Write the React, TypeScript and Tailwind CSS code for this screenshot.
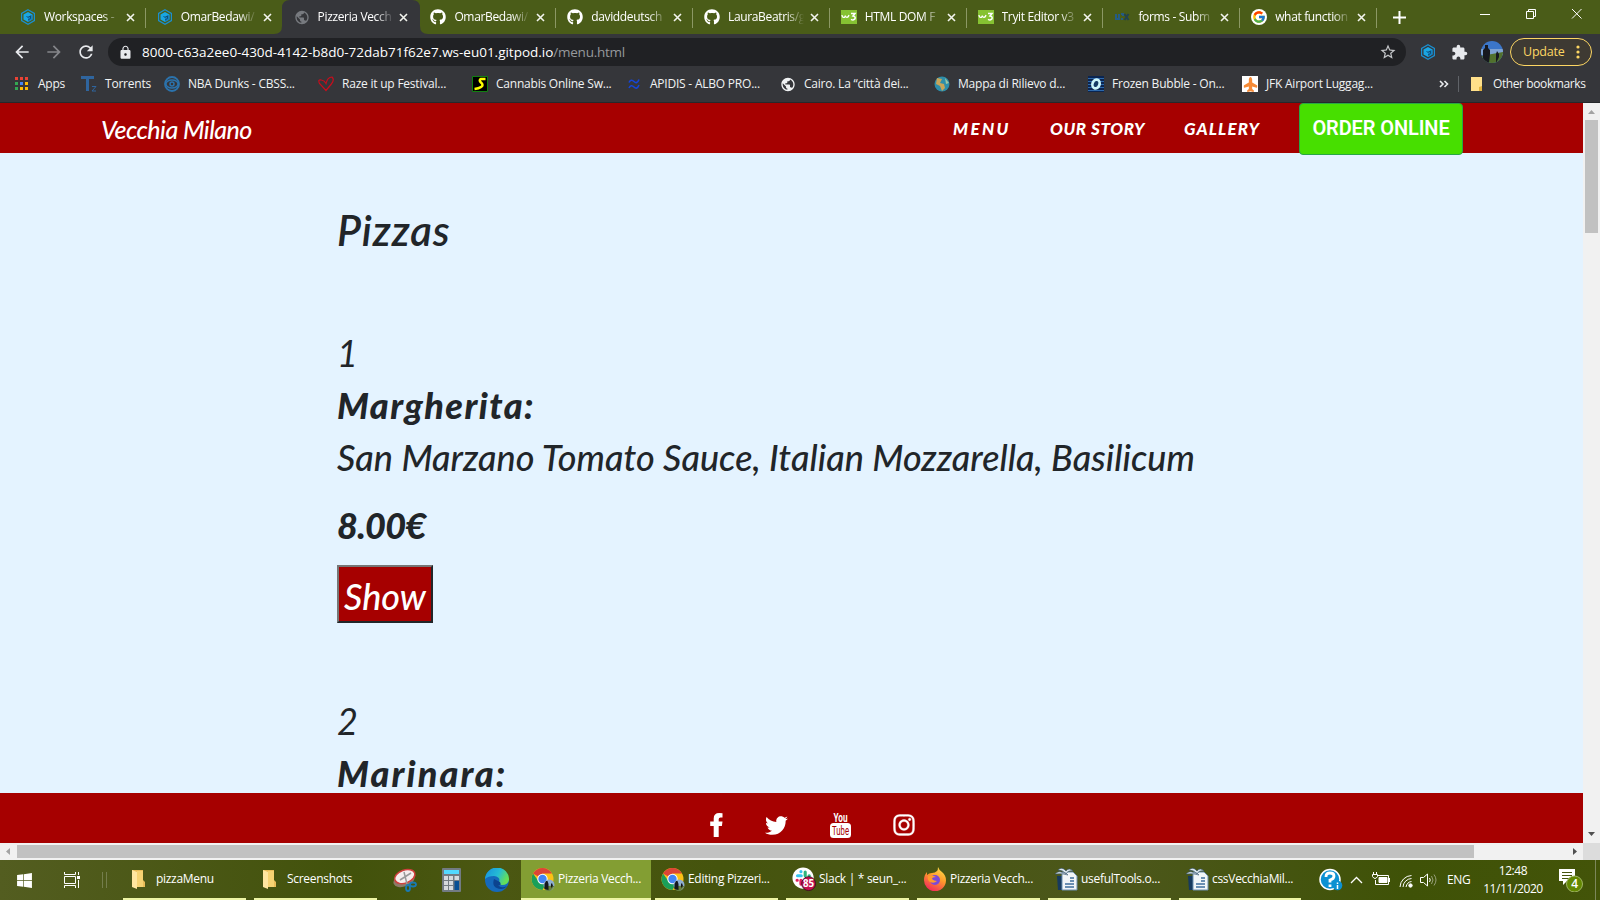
import React from 'react';
import { FaTwitter, FaInstagram, FaGithub, FaPlane, FaWindows } from 'react-icons/fa';
import { FcGoogle } from 'react-icons/fc';
import { MdArrowBack, MdArrowForward, MdRefresh, MdStarBorder, MdPublic, MdExtension, MdLock } from 'react-icons/md';

const Gitpod = () => (
  <svg className="size-4" viewBox="0 0 16 16" fill="none">
    <path d="M8 .8 14.4 4.4v7.2L8 15.2 1.6 11.600V4.400Z" stroke="#1b8fd0" strokeWidth="1.2" />
    <path d="M8 3 12.500 5.500v5L8 13 3.500 10.500v-5Z" fill="#1aa6e4" />
    <path d="M8 8v5l4.500-2.500v-5Z" fill="#1583c4" />
    <path d="M6.500 7.500 8 8.300l2.500-1.400v2.600L8 11" stroke="#0d4f78" strokeWidth="1" />
  </svg>
);
const W3 = () => (
  <svg className="size-4" viewBox="0 0 16 16" fill="none">
    <path fill="#86c232" d="M0 1h16v14H0z" />
    <path d="M1 6q.3 2.500 1.700 2.300Q4 8.500 4.300 6.500q.3 2 1.800 1.800Q7.500 8 8 6" stroke="#fff" strokeWidth="1.300" />
    <path d="M10 4.500h4L12 7q2.800.3 2 2.800-1.500 2-4 .5" stroke="#fff" strokeWidth="1.500" />
  </svg>
);
const Ux = () => (
  <svg className="size-4" viewBox="0 0 16 16" fill="none" strokeWidth="2">
    <path d="M2 5v5h3V5M7 5h2v2M7 10h2" stroke="#245c85" />
    <path d="m10.500 5 4 6m0-6-4 6" stroke="#22424f" />
  </svg>
);
const Google = () => (
  <span className="flex size-4 items-center justify-center rounded-full bg-white"><FcGoogle className="size-3.5" /></span>
);
const Close = () => (
  <svg className="size-[9px] shrink-0" viewBox="0 0 9 9"><path d="m1 1 7 7m0-7L1 8" stroke="#f3f5ee" strokeWidth="1.600" /></svg>
);

const tabs = [
  { icon: <Gitpod />, title: 'Workspaces -' },
  { icon: <Gitpod />, title: 'OmarBedawi/' },
  { icon: <MdPublic className="size-[17px] text-[#777a7f]" />, title: 'Pizzeria Vecch' },
  { icon: <FaGithub className="size-4 text-white" />, title: 'OmarBedawi/' },
  { icon: <FaGithub className="size-4 text-white" />, title: 'daviddeutsch' },
  { icon: <FaGithub className="size-4 text-white" />, title: 'LauraBeatris/g' },
  { icon: <W3 />, title: 'HTML DOM F' },
  { icon: <W3 />, title: 'Tryit Editor v3' },
  { icon: <Ux />, title: 'forms - Subm' },
  { icon: <Google />, title: 'what function' },
];

function TabStrip() {
  return (
    <div className="flex h-[34px] bg-[#4a5c18] pl-[9px] text-[12px] tracking-[-0.35px] text-white">
      {tabs.map((t, i) => (
        <div key={i} className="relative flex w-[136.8px] shrink-0 items-center">
          {i === 2 && (
            <svg className="absolute -left-[9px] top-0 h-[34px] w-[154px]" viewBox="0 0 154 34">
              <path d="M0 34q8 0 8-8V8q0-8 8-8h122q8 0 8 8v18q0 8 8 8Z" fill="#35363a" />
            </svg>
          )}
          <div className="relative flex w-full items-center pl-[11px] pr-[7px]">
            <span className="flex w-4 shrink-0 justify-center">{t.icon}</span>
            <span className="ml-2 w-[76px] shrink-0 overflow-hidden whitespace-nowrap [mask-image:linear-gradient(to_right,black_76%,transparent)]">{t.title}</span>
            <span className="ml-auto mr-1 flex"><Close /></span>
          </div>
          {i !== 1 && i !== 2 && <span className="absolute right-0 top-2 h-5 w-px bg-[#8c9865]" />}
        </div>
      ))}
      <div className="flex flex-1 items-center pl-4">
        <svg className="size-[13px]" viewBox="0 0 13 13"><path d="M6.500 0v13M0 6.500h13" stroke="#fff" strokeWidth="2" /></svg>
        <svg className="ml-auto h-3 w-[102px] -translate-y-[3px]" viewBox="0 0 102 12" fill="none" stroke="#fff">
          <path d="M0 6.500h10M46.500 3.500h7v7h-7zM48.500 3V1.500h7v7H54M92 1l9.500 9.500m0-9.500L92 10.500" />
        </svg>
        <span className="w-[18px]" />
      </div>
    </div>
  );
}

function Toolbar() {
  return (
    <div className="flex h-9 items-center bg-[#35363a] text-[#e8eaed]">
      <MdArrowBack className="ml-3 size-5" />
      <MdArrowForward className="ml-3 size-5 text-[#85868a]" />
      <MdRefresh className="ml-3 size-5" />
      <div className="ml-3 flex h-7 w-[1298px] shrink-0 items-center rounded-full bg-[#202124] pl-2.5 pr-[9px]">
        <MdLock className="size-[15px]" />
        <span className="ml-[9px] whitespace-nowrap text-[13.500px] tracking-[-0.01px] text-white">8000-c63a2ee0-430d-4142-b8d0-72dab71f62e7.ws-eu01.gitpod.io<span className="tracking-[-0.25px] text-[#96999d]">/menu.html</span></span>
        <MdStarBorder className="ml-auto size-[18px] text-[#c5c7ca]" />
      </div>
      <span className="ml-[14px] shrink-0"><Gitpod /></span>
      <MdExtension className="ml-[15px] size-[17px] shrink-0" />
      <svg className="ml-[13px] size-[22px] shrink-0" viewBox="0 0 22 22">
        <defs><clipPath id="av"><circle cx="11" cy="11" r="11" /></clipPath></defs>
        <g clipPath="url(#av)">
          <path fill="#3b76c9" d="M0 0h22v22H0z" /><path fill="#7fa3d2" d="M0 8h22v6H0z" /><path fill="#51712d" d="M0 15l22-4v11H0z" />
          <path fill="#17191f" d="M2 22V9l2-2V4h3v3l2 2v4l-1 9zM15 22v-9l1-3 2 3v3z" />
        </g>
      </svg>
      <div className="ml-[7px] flex h-7 w-[82px] shrink-0 items-center rounded-full border border-[#fdd663] bg-[#3e3a33] pl-3 text-[12.500px] tracking-[-0.2px] text-[#fdd663]">
        Update
        <svg className="ml-auto mr-[11px] h-3.5 w-1" viewBox="0 0 4 14" fill="#fdd663"><circle cx="2" cy="2" r="1.600" /><circle cx="2" cy="7" r="1.600" /><circle cx="2" cy="12" r="1.600" /></svg>
      </div>
    </div>
  );
}

const bookmarks = [
  { w: 'w-[67px]', t: 'Apps', icon: <svg className="size-4" viewBox="0 0 16 16"><path fill="#ea4335" d="M1 1h3v3H1zM6 1h3v3H6zM11 1h3v3h-3z" /><path fill="#34a853" d="M1 6h3v3H1zM1 11h3v3H1z" /><path fill="#4285f4" d="M6 6h3v3H6z" /><path fill="#fbbc04" d="M11 6h3v3h-3zM6 11h3v3H6zM11 11h3v3h-3z" /></svg> },
  { w: 'w-[83px]', t: 'Torrents', icon: <svg className="size-4" viewBox="0 0 16 16" fill="none" stroke="#2f659e"><path d="M0 1.500h13M6.500 1v14" strokeWidth="3" /><path d="M11 10.500h4l-4 4.500h4" strokeWidth="1" /></svg> },
  { w: 'w-[154px]', t: 'NBA Dunks - CBSS...', icon: <svg className="size-4" viewBox="0 0 16 16" fill="none" stroke="#2b73ad"><circle cx="8" cy="8" r="7" strokeWidth="1.800" /><ellipse cx="8" cy="8" rx="6" ry="4" strokeWidth="1.400" /><circle cx="8" cy="8" r="2" strokeWidth="1.500" /></svg> },
  { w: 'w-[154px]', t: 'Raze it up Festival...', icon: <svg className="size-4" viewBox="0 0 16 16"><path d="M8 14.500 1.500 7.500Q-.5 3 3.500 4q3 .5 4.500 3.500Q9.500 1 14 1q3 3-1 7.500z" fill="none" stroke="#c90d1c" strokeWidth="1.200" /></svg> },
  { w: 'w-[154px]', t: 'Cannabis Online Sw...', icon: <svg className="size-4" viewBox="0 0 16 16"><path fill="#000" stroke="#108010" d="M.5.5h15v15H.5z" /><path d="M13.500 3H9Q6.500 4 9 6.500q3 2.500 0 4.500-2 1.500-6.500 2" fill="none" stroke="#ff0" strokeWidth="2.500" /></svg> },
  { w: 'w-[154px]', t: 'APIDIS - ALBO PRO...', icon: <svg className="size-4" viewBox="0 0 16 16"><path d="M3 6.500q2-4 5-1t5-2M3 12q2-4 5-1t5-2" fill="none" stroke="#1546d8" strokeWidth="1.600" /></svg> },
  { w: 'w-[154px]', t: 'Cairo. La “città dei...', icon: <MdPublic className="size-[17px] text-[#f1f3f4]" /> },
  { w: 'w-[154px]', t: 'Mappa di Rilievo d...', icon: <svg className="size-4" viewBox="0 0 16 16"><circle cx="8" cy="8" r="7.500" fill="#2d8eaa" /><path d="m3 2 5 1-2 4 4 1 1 4-3 3-2-5-4-2z" fill="#c6a55a" /><path d="m11 2 4 5-3 1z" fill="#9ac6a5" /></svg> },
  { w: 'w-[154px]', t: 'Frozen Bubble - On...', icon: <svg className="size-4" viewBox="0 0 16 16"><path fill="#0b2550" d="M0 0h16v16H0z" /><path d="M0 2.500h16M0 5.500h16M0 8.500h16M0 11.500h16M0 14.500h16" stroke="#2c68ab" /><ellipse cx="8" cy="8" rx="3.500" ry="4.500" transform="rotate(20 8 8)" fill="#153b66" stroke="#cdf6fb" strokeWidth="2.700" /></svg> },
  { w: 'w-[154px]', t: 'JFK Airport Luggag...', icon: <span className="flex size-4 items-center justify-center bg-white"><FaPlane className="size-[15px] -rotate-90 text-[#f58a36]" /></span> },
];

function Bookmarks() {
  return (
    <div className="flex h-[33px] items-center border-b border-[#26282b] bg-[#35363a] pb-1 text-[12px] tracking-[-0.22px] text-[#f1f3f4]">
      <div className="flex w-[1434px] shrink-0 items-center pl-[14px]">
        {bookmarks.map((b) => (
          <div key={b.t} className={'flex shrink-0 items-center whitespace-nowrap ' + b.w}>
            <span className="flex w-4 shrink-0 justify-center">{b.icon}</span>
            <span className="ml-2">{b.t}</span>
          </div>
        ))}
      </div>
      <svg className="ml-[5px] h-2 w-2.5 shrink-0" viewBox="0 0 10 8" fill="none" stroke="#e8eaed" strokeWidth="1.600"><path d="m1 1 3 3-3 3M5.500 1l3 3-3 3" /></svg>
      <span className="ml-[9px] h-4 w-px bg-[#606368]" />
      <svg className="ml-2.5 size-4 shrink-0" viewBox="0 0 16 16"><path d="M2 1h11v14H2z" fill="#ffe08a" /><path d="M10 15v-4l3-1v5z" fill="#e2b33e" /></svg>
      <span className="ml-2 whitespace-nowrap tracking-[-0.4px]">Other bookmarks</span>
    </div>
  );
}

type PizzaProps = { n: string; name: React.ReactNode; desc?: string; price?: string };

function Pizza({ n, name, desc, price }: PizzaProps) {
  return (
    <div className="h-[368px] shrink-0 whitespace-nowrap text-[36px] leading-[52px]">
      <div>{n}</div>
      <div className="font-black">{name}</div>
      {desc && <div className="font-medium tracking-[0.04px]">{desc}</div>}
      {price && <div className="mt-4 font-black tracking-[-0.7px]">{price}</div>}
      {price && (
        <button className="mt-[14px] flex h-[58px] w-24 items-center justify-center border-2 border-b-[#212529] border-l-[#767676] border-r-[#212529] border-t-[#767676] bg-[#a60000] pt-1 font-medium italic text-white">Show</button>
      )}
    </div>
  );
}

function Site() {
  return (
    <div className="flex h-[740px]">
      <div className="flex w-[1583px] flex-col bg-[#e4f3ff] font-['Lato',sans-serif] italic text-[#212529]">
        <nav className="flex h-[50px] shrink-0 items-center whitespace-nowrap bg-[#a60000] pl-[101px] text-white">
          <span className="w-[852px] pt-1 text-[25px] font-medium tracking-[-0.55px]">Vecchia Milano</span>
          <span className="w-[97px] pt-0.5 text-[17px] font-black tracking-[2.4px]">MENU</span>
          <span className="w-[134px] pt-0.5 text-[17px] font-black tracking-[0.6px]">OUR STORY</span>
          <span className="w-[115px] pt-0.5 text-[17px] font-black tracking-[1.1px]">GALLERY</span>
          <span className="flex h-[52px] w-[164px] shrink-0 items-center justify-center self-start rounded-[4px] border border-[#28a745] bg-[#47df00] pb-0.5 font-['Roboto'] text-[20px] font-semibold not-italic tracking-[-0.1px]">ORDER ONLINE</span>
        </nav>
        <main className="flex h-[640px] flex-col overflow-hidden pl-[337px]">
          <h1 className="mt-[53px] shrink-0 text-[42px] font-semibold leading-[48px] tracking-[0.9px]">Pizzas</h1>
          <div className="h-[73px] shrink-0" />
          <Pizza n="1" name={<span className="tracking-[1.45px]">Margherita:</span>} desc="San Marzano Tomato Sauce, Italian Mozzarella, Basilicum" price="8.00€" />
          <Pizza n="2" name={<span className="tracking-[2.1px]">Marinara:</span>} />
        </main>
        <footer className="flex h-[50px] shrink-0 items-center bg-[#a60000] pl-[710px] pt-3.5 text-white">
          <svg className="h-6 w-[13px]" viewBox="0 0 13 24"><path d="M12.500.3v4.200h-2q-1.800 0-1.800 1.700v2.300h3.800l-.6 4.400H8.700V24H3.700V12.900H.2V8.500h3.500V5.500Q3.700 0 9.300 0q2 0 3.200.3z" fill="#fff" /></svg>
          <FaTwitter className="ml-[42px] size-[23px]" />
          <svg className="ml-[42px] h-[26px] w-[21px]" viewBox="0 0 21 26">
            <rect y="11" width="21" height="15" rx="3.500" fill="#fff" />
            <text x="3.500" y="9.800" textLength="14" lengthAdjust="spacingAndGlyphs" fontFamily="Roboto" fontStyle="normal" fontWeight="700" fontSize="12" fill="#fff">You</text>
            <text x="2" y="23" textLength="17" lengthAdjust="spacingAndGlyphs" fontFamily="Roboto" fontStyle="normal" fontWeight="400" fontSize="13" fill="#a60000">Tube</text>
          </svg>
          <FaInstagram className="ml-[41px] size-6" stroke="#fff" strokeWidth="8" />
        </footer>
      </div>
      <div className="flex w-[17px] flex-col items-center bg-[#f1f1f1]">
        <svg className="h-[17px] w-[17px] shrink-0" viewBox="0 0 17 17"><path d="m5 11 3.500-4 3.500 4z" fill="#a3a3a3" /></svg>
        <div className="h-[113px] w-[13px] bg-[#c1c1c1]" />
        <svg className="mt-auto h-[17px] w-[17px] shrink-0" viewBox="0 0 17 17"><path d="m5 6 3.500 4L12 6z" fill="#505050" /></svg>
      </div>
    </div>
  );
}

function HScroll() {
  return (
    <div className="flex h-[17px] items-center bg-[#f1f1f1]">
      <svg className="size-[17px]" viewBox="0 0 17 17"><path d="M10 5 6 8.500l4 3.500z" fill="#a3a3a3" /></svg>
      <div className="h-[13px] w-[1457px] bg-[#c1c1c1]" />
      <svg className="ml-auto size-[17px]" viewBox="0 0 17 17"><path d="m7 5 4 3.500L7 12z" fill="#505050" /></svg>
      <div className="size-[17px] bg-[#dcdcdc]" />
    </div>
  );
}

const Folder = () => <svg className="h-5 w-[15px]" viewBox="0 0 15 20"><path d="M1 1h11v10l2 2v5H1z" fill="#e9bd59" /><path d="M1 1 6 3v17l-5-2z" fill="#ffe6a0" /><path d="M6 2h6v16H6z" fill="#f6d373" /></svg>;
const Chrome = () => (
  <svg className="size-6" viewBox="0 0 24 24">
    <circle cx="11.500" cy="12" r="11" fill="#fbc116" /><path d="M11.500 12 2 6.500A11 11 0 0 1 21 6.500h-9.500z" fill="#dc4437" /><path d="M2 6.500A11 11 0 0 0 11.500 23l4.500-8.500-9-1z" fill="#1a9f59" />
    <circle cx="11.500" cy="12" r="5.200" fill="#fff" /><circle cx="11.500" cy="12" r="4.200" fill="#4285f4" />
    <circle cx="18" cy="18" r="5.500" fill="#8eafd0" /><path d="M12.500 20q5-2 11-1-3 5-6 5-3 0-5-4z" fill="#67803d" /><path d="M13.500 22v-5l1.500-3h1.500l1 3v6zM20 21v-4l1-1 1 3z" fill="#15171c" />
  </svg>
);
const Slack = () => (
  <svg className="size-[26px]" viewBox="0 0 26 26">
    <circle cx="12" cy="12" r="11.500" fill="#fff" />
    <g fill="none" strokeWidth="3.400" strokeLinecap="round"><path d="M6 9.500h4M9.700 5v.2" stroke="#36c5f0" /><path d="M14.300 5.500v4M18.500 9.500h.2" stroke="#2eb67d" /><path d="M9.700 14.500v4M5.500 14.300h.2" stroke="#e01e5a" /></g>
    <circle cx="18" cy="18" r="7.500" fill="#c4104d" stroke="#3b0d20" /><text x="18" y="21.800" textAnchor="middle" fontFamily="Open Sans" fontWeight="700" fontSize="10.500" letterSpacing="0" fill="#fff">85</text>
  </svg>
);
const Firefox = () => (
  <svg className="size-6" viewBox="0 0 24 24">
    <defs><linearGradient id="ff" x1=".8" y1="0" x2=".3" y2="1"><stop stopColor="#ffe14a" /><stop offset=".45" stopColor="#ff9a2b" /><stop offset="1" stopColor="#f2265c" /></linearGradient></defs>
    <path d="M15 0q1 3 4 5 4 3 4 8.500A11 11 0 0 1 1 13Q1 8 4 5v3q2-2 5-2 3 0 5-2 1-1 1-4z" fill="url(#ff)" />
    <circle cx="12" cy="13" r="5" fill="#7a49d8" /><path d="M5 9q5-1 8 1-4 0-4 2 2 2 5 2-3 3-7 1-3-2-2-6z" fill="#ff9b2c" />
  </svg>
);
const Writer = () => (
  <svg className="size-6" viewBox="0 0 24 24"><path d="M3 9h7v14H4z" fill="#173a5e" /><path d="M8 5h11l4 4v14H8z" fill="#f1f5f8" stroke="#6d8fae" /><path d="M16 11h4M16 14h4M11 17h9M11 20h9" stroke="#3e6d9c" strokeWidth="1.500" /><path d="M1 7q4-4 8-1 3-1 5 2-6-2-13-1zM4 3q4-4 8 1 3-4 7 0-5-1-7 3-3-4-8-4z" fill="#dce6ed" stroke="#34526d" strokeWidth=".6" /></svg>
);
const apps = [
  { w: 'w-[130px]', icon: <Chrome />, t: 'Pizzeria Vecch...' },
  { w: 'w-[123px]', icon: <Chrome />, t: 'Editing Pizzeri...' },
  { w: 'w-[123px]', icon: <Slack />, t: 'Slack | * seun_...' },
  { w: 'w-[123px]', icon: <Firefox />, t: 'Pizzeria Vecch...' },
  { w: 'w-[123px]', icon: <Writer />, t: 'usefulTools.o...' },
  { w: 'w-[122px]', icon: <Writer />, t: 'cssVecchiaMil...' },
];

function Taskbar() {
  return (
    <div className="flex h-10 items-center bg-[linear-gradient(to_right,#535d20,#42520b_22%,#4b5712_31%,#45540d_45%,#4c571b_70%,#3f5207_88%,#435409)] text-[12px] tracking-[-0.3px] text-white">
      <FaWindows className="ml-4 size-[17px] shrink-0" />
      <svg className="ml-[31px] h-4 w-[17px] shrink-0" viewBox="0 0 17 16" fill="none" stroke="#fff"><path d="M.5 0v2.500h11V0M.5 4.500h11v7H.5zM.5 16v-2.500h11V16M14.500 0v3M14.500 8v8" /><path d="M13 4h3v3h-3z" fill="#fff" stroke="none" /></svg>
      <span className="ml-[21px] h-4 w-[5px] shrink-0 border-x border-[#747d4c]" />
      {['pizzaMenu', 'Screenshots'].map((t, i) => (
        <div key={t} className={(i ? 'ml-2 ' : 'ml-4 ') + 'flex h-10 w-[123px] shrink-0 items-center border-b-2 border-[#edf5a5] pl-2'}><Folder /><span className="ml-2.5">{t}</span></div>
      ))}
      <svg className="ml-[16px] size-6 shrink-0" viewBox="0 0 24 24" fill="none"><ellipse cx="11" cy="12" rx="11" ry="6.500" fill="#8d7a68" transform="rotate(-20 11 12)" /><ellipse cx="12" cy="8.500" rx="10.500" ry="6.500" fill="#f5eeee" stroke="#d0403e" strokeWidth="1.500" transform="rotate(-20 12 9)" /><path d="m11 4 3 12m4-11L7 12" stroke="#999" strokeWidth="1.500" /><ellipse cx="15" cy="20" rx="2" ry="3" stroke="#197ab3" strokeWidth="1.800" /><ellipse cx="20" cy="16.500" rx="3" ry="2" stroke="#197ab3" strokeWidth="1.800" /></svg>
      <svg className="ml-[25px] h-6 w-[19px] shrink-0" viewBox="0 0 19 24"><rect width="19" height="24" rx="1" fill="#727b83" /><path d="M2 2h15v4H2z" fill="#53d9ff" /><path d="M2 8h4v4H2zM7 8h4v4H7zM12.500 8H17v4h-4.500zM2 13h4v4H2zM7 13h4v4H7zM2 18h4v4H2zM7 18h4v4H7z" fill="#d5dade" /><path d="M12.500 13H17v9h-4.500z" fill="#074f94" /></svg>
      <svg className="ml-[24px] size-6 shrink-0" viewBox="0 0 24 24"><defs><linearGradient id="eg" x2="1" y2=".4"><stop stopColor="#168ee0" /><stop offset=".6" stopColor="#25bcd4" /><stop offset="1" stopColor="#65df57" /></linearGradient></defs><circle cx="12" cy="12" r="12" fill="#1569bb" /><path d="M0 11A12 12 0 0 1 24 12q-1 5-7 5-4 0-3-3 2-5-5-6-6 0-9 3z" fill="url(#eg)" /><path d="M9 11q-3 9 7 10 4 0 6-3-6 3-9-1 4 1 2-3z" fill="#0c438f" /></svg>
      <div className="ml-[12px] flex h-10 shrink-0">
        {apps.map((a, i) => (
          <div key={i} className={'flex h-10 shrink-0 items-center whitespace-nowrap border-b-2 border-[#edf5a5] ' + a.w + (i === 0 ? ' bg-[#839e33] pl-2.5' : i === 1 ? ' ml-1 pl-1.5' : ' ml-2 pl-1.5')}>
            <span className="flex w-6 shrink-0 justify-center">{a.icon}</span><span className="ml-[3px]">{a.t}</span>
          </div>
        ))}
      </div>
      <svg className="ml-[18px] size-6 shrink-0" viewBox="0 0 24 24"><circle cx="11" cy="11.500" r="10" fill="#0c91d2" stroke="#fff" strokeWidth="1.500" /><path d="M7 9q0-4 4-4t4 3-4 4v2.500M11 16.500v2.500" fill="none" stroke="#fff" strokeWidth="2.800" /><circle cx="18.500" cy="17.500" r="4.800" fill="#0c91d2" /><path d="M18.500 14.500v1.500M18.500 17v4" stroke="#fff" strokeWidth="1.500" /></svg>
      <svg className="ml-[7px] h-[18px] w-[88px] shrink-0" viewBox="0 0 88 18" fill="none" stroke="#fff">
        <path d="m1 12 5.500-5.500L12 12" strokeWidth="1.300" />
        <path d="M28 4.500h10.500v9H25.500V9M39.500 7v4M22.500 3.500h5v2q-2.500 4-5 0zM23.500 3V1M26.500 3V1" /><path d="M29 6.500h8v5h-8z" fill="#fff" />
        <path d="M50 16A12 12 0 0 1 61.500 4.500M53 16a9 9 0 0 1 8.500-8.500M56 16q1-5 5.500-5.500" /><circle cx="60.500" cy="14.500" r="1.700" fill="#fff" />
        <path d="M70.500 6.500h3L77.500 3v12l-4-3.500h-3zM79.500 7q1.500 2 0 4" /><path d="M81.500 5q3 4 0 8M84 3.500q4 5.500 0 11" stroke="#98a07b" />
      </svg>
      <span className="ml-[9px] w-[23px] shrink-0 tracking-[-0.3px]">ENG</span>
      <div className="ml-[11px] w-[64px] shrink-0 text-center leading-[18px] tracking-[-0.4px]">12:48<br />11/11/2020</div>
      <svg className="ml-[14px] size-6 shrink-0" viewBox="0 0 24 24"><path d="M0 1h16v12H8l-4 4v-4H0z" fill="#fff" /><path d="M3 4.500h10M3 7.500h10M3 10.500h7" stroke="#45540d" /><circle cx="15.500" cy="16" r="8" fill="#638800" stroke="#a0b565" /><text x="15.500" y="20.200" textAnchor="middle" fontFamily="Open Sans" fontWeight="600" fontSize="12" fill="#fff">4</text></svg>
      <span className="ml-auto mr-1 h-10 w-px shrink-0 bg-[#7c875a]" />
    </div>
  );
}

export default function App() {
  return (
    <div className="h-[900px] w-[1600px] overflow-hidden font-['Open_Sans','Noto_Sans',sans-serif]">
      <TabStrip />
      <Toolbar />
      <Bookmarks />
      <Site />
      <HScroll />
      <Taskbar />
    </div>
  );
}
